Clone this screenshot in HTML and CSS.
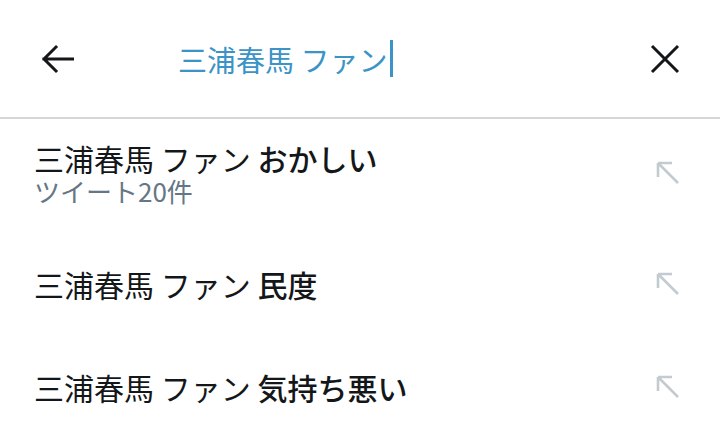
FILE: index.html
```html
<!DOCTYPE html>
<html lang="ja">
<head>
    <meta charset="UTF-8">
    <meta name="viewport" content="width=device-width, initial-scale=1.0">
    <title>検索</title>
    <link rel="stylesheet" href="styles.css">
</head>
<body>
    <header class="search-bar">
        <button class="icon-btn back" aria-label="戻る">
            <svg width="34" height="30" viewBox="0 0 34 30">
                <path d="M33 15H4M16 3L4 15l12 12" fill="none" stroke="#14171a" stroke-width="3" stroke-linecap="square"/>
            </svg>
        </button>
        <div class="query">三浦春馬 ファン<span class="caret"></span></div>
        <button class="icon-btn close" aria-label="クリア">
            <svg width="30" height="30" viewBox="0 0 30 30">
                <path d="M2 2l26 26M28 2L2 28" fill="none" stroke="#14171a" stroke-width="3"/>
            </svg>
        </button>
    </header>

    <ul class="suggestions">
        <li class="item first">
            <div class="text">
                <div class="title">三浦春馬 ファン <b>おかしい</b></div>
                <div class="sub">ツイート20件</div>
            </div>
            <svg class="fill-arrow" width="24" height="24" viewBox="0 0 24 24">
                <path d="M2 2l20 20M2 2h14M2 2v14" fill="none" stroke="#c3cbd1" stroke-width="2.6"/>
            </svg>
        </li>
        <li class="item">
            <div class="text">
                <div class="title">三浦春馬 ファン <b>民度</b></div>
            </div>
            <svg class="fill-arrow" width="24" height="24" viewBox="0 0 24 24">
                <path d="M2 2l20 20M2 2h14M2 2v14" fill="none" stroke="#c3cbd1" stroke-width="2.6"/>
            </svg>
        </li>
        <li class="item">
            <div class="text">
                <div class="title">三浦春馬 ファン <b>気持ち悪い</b></div>
            </div>
            <svg class="fill-arrow" width="24" height="24" viewBox="0 0 24 24">
                <path d="M2 2l20 20M2 2h14M2 2v14" fill="none" stroke="#c3cbd1" stroke-width="2.6"/>
            </svg>
        </li>
    </ul>
</body>
</html>
```

FILE: styles.css
```css
body {
    margin: 0;
    background: #fff;
    font-family: "Noto Sans CJK JP", "Noto Sans", sans-serif;
    color: #14171a;
}
.search-bar {
    display: flex;
    align-items: center;
    height: 117px;
    border-bottom: 2px solid #d6d6d6;
    padding: 0 40px 0 40px;
}
.icon-btn {
    background: none;
    border: none;
    padding: 0;
    display: flex;
    cursor: pointer;
}
.query {
    flex: 1;
    margin-left: 104px;
    font-size: 29px;
    color: #3b93c6;
    display: flex;
    align-items: center;
    height: 38px;
}
.caret {
    display: inline-block;
    width: 3px;
    height: 37px;
    background: #3b93c6;
    margin-left: 2px;
}
.suggestions {
    list-style: none;
    margin: 0;
    padding: 0;
}
.item {
    display: flex;
    align-items: center;
    justify-content: space-between;
    height: 103px;
    padding: 0 40px 0 34px;
}
.item.first {
    height: 113px;
    padding-bottom: 5px;
    box-sizing: border-box;
}
.title {
    font-size: 30px;
    line-height: 36px;
}
.title b {
    font-weight: 500;
}
.sub {
    font-size: 26px;
    line-height: 30px;
    color: #657786;
}
.fill-arrow {
    flex-shrink: 0;
}
```
